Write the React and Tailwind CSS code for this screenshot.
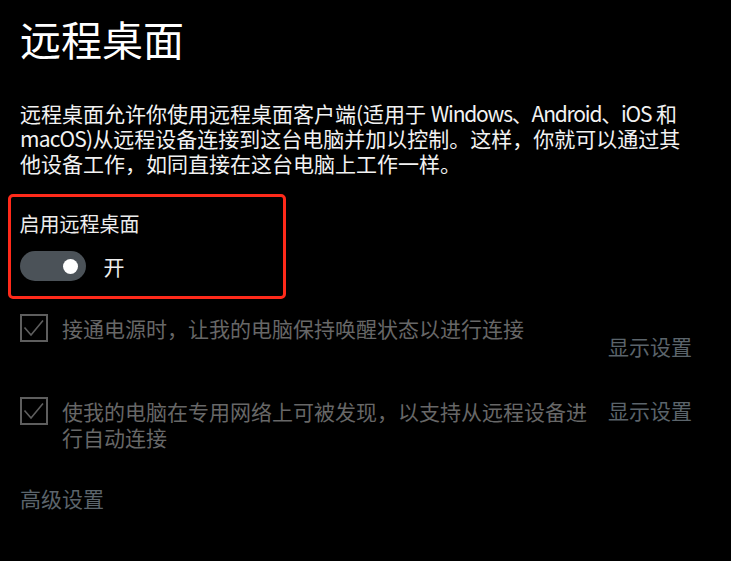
import React from 'react';

const Checkbox = () => (
  <div className="w-[28px] h-[28px] shrink-0 border-2 border-[#5e5e5e]">
    <svg viewBox="0 0 24 24" className="w-full h-full" fill="none">
      <path d="M2.5 11.5 L9 19 L21 4.5" stroke="#5e5e5e" strokeWidth="1.6" />
    </svg>
  </div>
);

const App = () => {
  return (
    <div className="w-[731px] h-[561px] overflow-hidden bg-black text-white font-['Noto_Sans_CJK_SC',sans-serif]">
      <div className="pl-5 pr-[39px] pt-[14px]">
        <h1 className="text-[41px] leading-[48px] font-normal text-white">远程桌面</h1>

        <div className="mt-[39px] text-[21px] leading-[25px] text-[#f2f2f2] whitespace-nowrap">
          <div>
            远程桌面允许你使用远程桌面客户端(适用于{' '}
            <span className="tracking-[-1.2px]">Windows、Android、iOS</span> 和
          </div>
          <div>
            <span className="tracking-[-0.8px]">macOS)</span>从远程设备连接到这台电脑并加以控制。这样，你就可以通过其
          </div>
          <div>他设备工作，如同直接在这台电脑上工作一样。</div>
        </div>

        {/* Toggle section */}
        <div className="mt-[18px] ml-[-12px] w-[278px] h-[105px] border-[3.5px] border-[#ff2a1a] rounded-[5px] pl-[8.5px] pt-[14px]">
          <div className="text-[20px] leading-[26px] text-[#ededed]">启用远程桌面</div>
          <div className="mt-[14px] flex items-center gap-[18px]">
            <div className="w-[66px] h-[30px] rounded-full bg-[#4b5258] flex items-center justify-end pr-[8px]">
              <div className="w-[15px] h-[15px] rounded-full bg-white" />
            </div>
            <span className="text-[21px] leading-[26px] text-[#ededed]">开</span>
          </div>
        </div>

        {/* Option 1 */}
        <div className="mt-[15px] flex justify-between">
          <div className="flex items-start gap-[14px]">
            <Checkbox />
            <span className="mt-px text-[21px] leading-[26px] text-[#676767]">
              接通电源时，让我的电脑保持唤醒状态以进行连接
            </span>
          </div>
          <span className="pt-[19px] text-[21px] leading-[26px] text-[#5b646b]">显示设置</span>
        </div>

        {/* Option 2 */}
        <div className="mt-[38px] flex justify-between items-start">
          <div className="flex items-start gap-[14px]">
            <Checkbox />
            <span className="mt-[1px] text-[21px] leading-[26px] text-[#676767]">
              使我的电脑在专用网络上可被发现，以支持从远程设备进
              <br />
              行自动连接
            </span>
          </div>
          <span className="text-[21px] leading-[26px] text-[#5b646b]">显示设置</span>
        </div>

        <div className="mt-[35px] text-[21px] leading-[26px] text-[#5b646b]">高级设置</div>
      </div>
    </div>
  );
};

export default App;
